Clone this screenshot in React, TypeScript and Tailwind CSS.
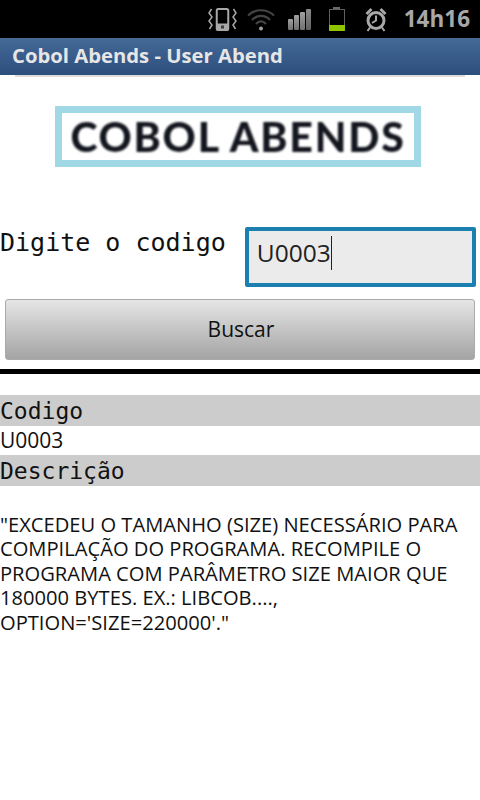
import React from "react";

const mono = "font-['DejaVu_Sans_Mono',monospace]";
const sans = "font-['Open_Sans','Noto_Sans',sans-serif]";

const StatusBar = () => (
  <div className="flex h-[38px] items-center justify-end bg-black">
    {/* vibrate */}
    <svg width="29" height="23" viewBox="0 0 29 23" className="mr-[10px]">
      <rect x="8.75" y="1" width="11.5" height="21" rx="1.5" fill="none" stroke="#a8a8a8" strokeWidth="2" />
      <rect x="8.5" y="15.5" width="12" height="7" fill="#a8a8a8" />
      <rect x="13" y="17.5" width="3" height="3" fill="#3c3c3c" />
      <path d="M3.5 1 L1 5 L4 9 L1 13 L4 17 L1.5 21" fill="none" stroke="#a8a8a8" strokeWidth="1.5" />
      <path d="M25.5 1 L28 5 L25 9 L28 13 L25 17 L27.5 21" fill="none" stroke="#a8a8a8" strokeWidth="1.5" />
    </svg>
    {/* wifi */}
    <svg width="28" height="23" viewBox="0 0 28 23" className="mr-[13px]">
      <path d="M1 7.5 C8 0.5 20 0.5 27 7.5" fill="none" stroke="#444" strokeWidth="2.2" />
      <path d="M5 12 C10 6.5 18 6.5 23 12" fill="none" stroke="#444" strokeWidth="2.2" />
      <path d="M9 16 C12 12.5 16 12.5 19 16" fill="none" stroke="#444" strokeWidth="2.2" />
      <circle cx="14" cy="20.5" r="2" fill="#a0a0a0" />
    </svg>
    {/* signal */}
    <div className="mr-[17px] flex items-end gap-[1px]">
      <div className="h-[11px] w-[5px] rounded-[1px] bg-gradient-to-b from-[#a0a0a0] to-[#707070]" />
      <div className="h-[15px] w-[5px] rounded-[1px] bg-gradient-to-b from-[#a0a0a0] to-[#707070]" />
      <div className="h-[18px] w-[5px] rounded-[1px] bg-gradient-to-b from-[#a0a0a0] to-[#707070]" />
      <div className="h-[21px] w-[5px] rounded-[1px] bg-gradient-to-b from-[#8a8a8a] to-[#606060]" />
    </div>
    {/* battery */}
    <div className="mr-[19px] flex w-[18px] flex-col items-center">
      <div className="h-[2px] w-[7px] bg-[#6a6a6a]" />
      <div className="flex h-[22px] w-[16px] flex-col justify-end border-x border-t border-[#5f5f5f]">
        <div className="mx-[-1px] h-[6px] rounded-b-[1px] bg-[#8fc400]" />
      </div>
    </div>
    {/* alarm */}
    <svg width="22" height="25" viewBox="0 0 22 25" className="mr-[17px]">
      <circle cx="11" cy="13.5" r="8" fill="none" stroke="#a8a8a8" strokeWidth="3" />
      <path d="M11 8.5 V13.5 L7 16" fill="none" stroke="#a8a8a8" strokeWidth="2" />
      <path d="M0.5 6 L5.5 1 L7.5 3 L2.5 8 Z M21.5 6 L16.5 1 L14.5 3 L19.5 8 Z" fill="#a8a8a8" />
      <path d="M5 20.5 L2.5 24 M17 20.5 L19.5 24" stroke="#a8a8a8" strokeWidth="2" />
    </svg>
    <span className={`${sans} mr-[10px] text-[22.5px] leading-none font-bold text-[#a8a8a8]`}>14h16</span>
  </div>
);

export default function App() {
  return (
    <div className="flex h-[800px] w-[480px] flex-col overflow-hidden bg-white">
      <StatusBar />
      <div className="flex h-[37px] items-center bg-gradient-to-b from-[#456a98] to-[#2c4e7c] pb-[2px] pl-[12px]">
        <span className={`${sans} text-[20.25px] leading-none font-bold text-[#e6e6e6]`}>
          Cobol Abends - User Abend
        </span>
      </div>
      <div className="mx-[15px] h-[2px] bg-[#dcdcdc]" />

      {/* logo */}
      <div className="mt-[29px] ml-[55px] flex h-[61px] w-[366px] items-center justify-center border-[7px] border-[#a1d8e6]">
        <span className="font-['Lato',sans-serif] text-[41px] leading-none font-black tracking-[1.8px] whitespace-nowrap text-[#14161f] blur-[1px]">
          COBOL ABENDS
        </span>
      </div>

      <div className="mt-[60px] flex items-start">
        <span className={`${mono} mt-[2px] text-[25px] leading-[28px] text-[#111]`}>Digite o codigo</span>
        <div className="ml-[19px] flex h-[60px] w-[231px] items-start rounded-[2px] border-[4px] border-[#1b80b0] bg-[#ebebeb] pt-[5px] pl-[8px]">
          <span className={`${sans} border-r border-[#222] text-[24.5px] leading-[34px] text-[#222]`}>U0003</span>
        </div>
      </div>

      <button
        className={`${sans} mx-[5px] mt-[12px] flex h-[61px] w-[470px] items-center justify-center rounded-[3px] border border-[#aaa] bg-gradient-to-b from-[#e6e6e6] to-[#a4a4a4] pl-[2px] text-[21px] text-[#111]`}
      >
        Buscar
      </button>

      <div className="mt-[9px] h-[5px] bg-black" />

      <div className={`${mono} mt-[21px] flex h-[31px] items-center bg-[#cccccc] pt-[1px] text-[23px] text-[#111]`}>Codigo</div>
      <div className={`${sans} flex h-[29px] items-center pt-[1px] text-[21px] text-[#111]`}>U0003</div>
      <div className={`${mono} flex h-[31px] items-center bg-[#cccccc] pt-[1px] text-[23px] text-[#111]`}>Descrição</div>

      <p className={`${sans} mt-[26px] text-[20.15px] leading-[24.4px] text-[#111]`}>
        "EXCEDEU O TAMANHO (SIZE) NECESSÁRIO PARA
        <br />
        COMPILAÇÃO DO PROGRAMA. RECOMPILE O
        <br />
        PROGRAMA COM PARÂMETRO SIZE MAIOR QUE
        <br />
        180000 BYTES. EX.: LIBCOB....,
        <br />
        OPTION='SIZE=220000'."
      </p>
    </div>
  );
}
